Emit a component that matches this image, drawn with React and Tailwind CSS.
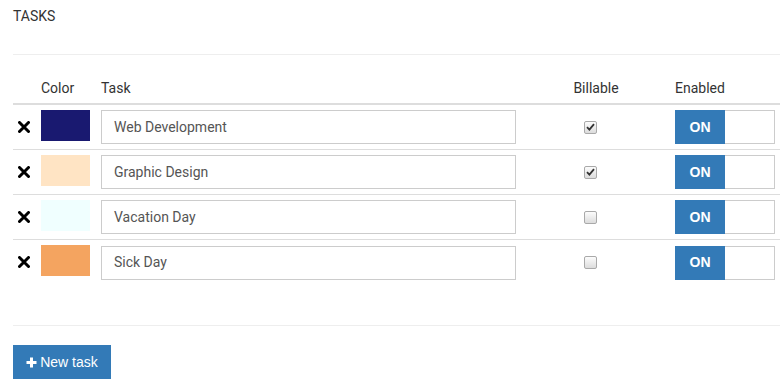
import React from "react";

const tasks = [
  { color: "bg-[#191970]", name: "Web Development", billable: true },
  { color: "bg-[#ffe4c4]", name: "Graphic Design", billable: true },
  { color: "bg-[#f0ffff]", name: "Vacation Day", billable: false },
  { color: "bg-[#f4a460]", name: "Sick Day", billable: false },
];

function XIcon() {
  return (
    <svg width="12" height="12" viewBox="0 0 12 12">
      <path d="M1.5 1.5 L10.5 10.5 M10.5 1.5 L1.5 10.5" stroke="#000" strokeWidth="3" strokeLinecap="round" />
    </svg>
  );
}

function Check({ checked }) {
  return (
    <span className="flex h-[13px] w-[13px] items-center justify-center rounded-[2px] border border-[#a9a9a9] bg-gradient-to-b from-[#fcfcfc] to-[#dcdcdc]">
      {checked && (
        <svg width="9" height="8" viewBox="0 0 9 8">
          <path d="M1 4.2 L3.4 6.6 L8 1.2" stroke="#333" strokeWidth="1.8" fill="none" />
        </svg>
      )}
    </span>
  );
}

export default function App() {
  return (
    <div className="w-[780px] h-[386px] overflow-hidden bg-white font-['Roboto',sans-serif] text-[14px] text-[#333]">
      <div className="pl-[13px]">
        <div className="pt-[6px] leading-[20px] text-[14px] text-[#333]">TASKS</div>
        <div className="mt-[28px] h-px w-[767px] bg-[#eeeeee]" />
        <div className="w-[767px] mt-[17px]">
          <div className="grid grid-cols-[23px_60px_424px_150px_110px] border-b-2 border-[#dddddd] leading-[20px]">
            <div />
            <div className="pl-[5px] pt-[6px] pb-[5px]">Color</div>
            <div className="pl-[5px] pt-[6px] pb-[5px]">Task</div>
            <div className="pl-[2px] pt-[6px] pb-[5px] text-center">Billable</div>
            <div className="pl-[5px] pt-[6px] pb-[5px]">Enabled</div>
          </div>
          {tasks.map((t, i) => (
            <div
              key={t.name}
              className={`grid grid-cols-[23px_60px_424px_150px_110px] items-center h-[45px] ${i < tasks.length - 1 ? "border-b border-[#dddddd]" : ""}`}
            >
              <div className="flex justify-end pr-[6px] pb-[1px]">
                <XIcon />
              </div>
              <div className="pl-[5px] self-start pt-[5px]">
                <div className={`h-[31px] w-[49px] ${t.color}`} />
              </div>
              <div className="pl-[5px]">
                <div className="flex h-[34px] w-[415px] items-center border border-[#cccccc] pl-[12px] text-[14px] text-[#555]">
                  {t.name}
                </div>
              </div>
              <div className="flex justify-center pr-[10px]">
                <Check checked={t.billable} />
              </div>
              <div className="pl-[5px]">
                <div className="flex h-[34px] w-[100px] border border-[#cccccc]">
                  <div className="flex w-[50px] -m-px h-[34px] items-center justify-center bg-[#337ab7] font-['Liberation_Sans',sans-serif] text-[14px] font-bold text-white">
                    ON
                  </div>
                </div>
              </div>
            </div>
          ))}
        </div>
        <div className="mt-[40px] h-px w-[767px] bg-[#eeeeee]" />
        <button className="mt-[19px] flex h-[34px] w-[98px] items-center justify-center gap-[3px] bg-[#337ab7] font-['Liberation_Sans',sans-serif] text-[14px] text-white">
          <svg width="11" height="11" viewBox="0 0 11 11">
            <path d="M5.5 0.5 V10.5 M0.5 5.5 H10.5" stroke="#fff" strokeWidth="3" />
          </svg>
          New task
        </button>
      </div>
    </div>
  );
}
